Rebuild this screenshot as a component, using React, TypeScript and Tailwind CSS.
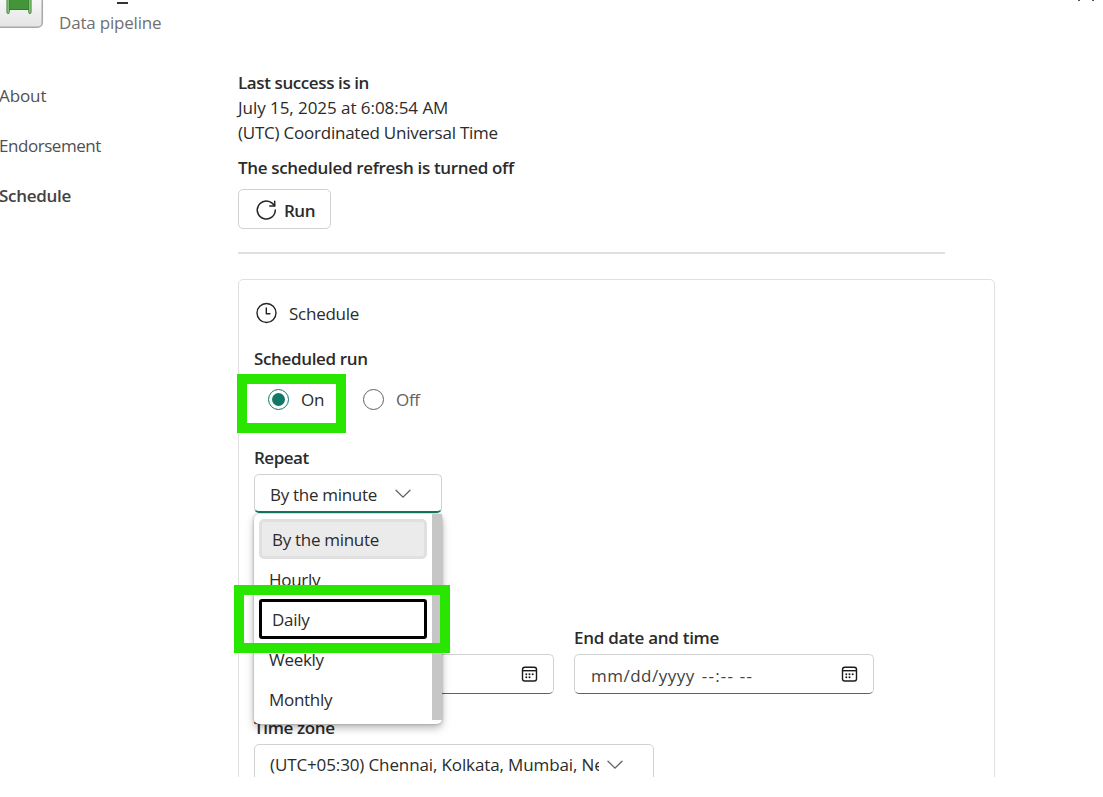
import { useState } from "react";

const REPEAT_OPTIONS = ["By the minute", "Hourly", "Daily", "Weekly", "Monthly"];

export default function App() {
  const [enabled, setEnabled] = useState(true);
  const [repeat, setRepeat] = useState("By the minute");

  return (
    <div className="h-[797px] w-[1103px] overflow-hidden bg-white font-['Open_Sans',sans-serif] text-[17px] leading-[25px] tracking-[-0.3px] text-[#2b2b2b]">
      <div className="flex h-[777px] flex-col overflow-hidden">
        <header className="flex h-[70px] shrink-0 items-start justify-between">
          <div className="flex">
            <PipelineLogo />
            <div className="ml-[15px] flex flex-col">
              <span className="mt-[2px] ml-[58px] h-[2px] w-[11px] bg-[#333]" />
              <span className="mt-[6px] tracking-[-0.2px] text-[#707070]">Data pipeline</span>
            </div>
          </div>
          <div className="mr-[9px] flex gap-[12px]">
            <span className="h-px w-[2px] bg-[#555]" />
            <span className="h-px w-[2px] bg-[#555]" />
          </div>
        </header>

        <div className="flex shrink-0">
          <nav className="flex w-[238px] shrink-0 flex-col gap-[25px] pt-[13px] text-[#505050]">
            <a className="-ml-px tracking-[-0.1px]">About</a>
            <a className="-ml-px tracking-[-0.45px]">Endorsement</a>
            <a className="-ml-px font-semibold tracking-[-0.3px] text-[#424242]">Schedule</a>
          </nav>

          <main className="w-[757px]">
            <p className="font-semibold tracking-[-0.4px]">Last success is in</p>
            <p className="tracking-[-0.05px]">July 15, 2025 at 6:08:54 AM</p>
            <p className="tracking-[-0.23px]">(UTC) Coordinated Universal Time</p>
            <p className="mt-[10px] font-semibold tracking-[-0.33px]">The scheduled refresh is turned off</p>
            <button className="mt-[9px] flex h-[40px] w-[93px] items-center rounded-[5px] border border-[#d1d1d1] pl-[17px]">
              <RefreshIcon />
              <span className="mt-[3px] ml-[8px] font-semibold tracking-[-0.5px]">Run</span>
            </button>
            <div className="mt-[23px] h-[2px] w-[707px] bg-[#e0e0e0]" />

            <section className="mt-[25px] h-[520px] rounded-[5px] border border-[#e0e0e0] px-[15px] pt-[21px]">
              <div className="flex items-center">
                <ClockIcon />
                <span className="ml-[11px] tracking-[-0.25px]">Schedule</span>
              </div>

              <p className="mt-[20px] font-semibold tracking-[-0.35px]">Scheduled run</p>
              <div className="relative mt-[16px] flex">
                <Radio label="On" checked={enabled} onClick={() => setEnabled(true)} />
                <Radio label="Off" checked={!enabled} onClick={() => setEnabled(false)} />
                <Highlight className="-top-[13px] -left-[17px] h-[59px] w-[109px]" />
              </div>

              <p className="mt-[33px] font-semibold tracking-[-0.5px]">Repeat</p>
              <div className="relative mt-[4px] w-[188px]">
                <button className="flex h-[39px] w-full items-center rounded-[5px] border border-b-2 border-[#d1d1d1] border-b-[#117865] pl-[15px]">
                  <span className="mt-[2px]">{repeat}</span>
                  <Chevron className="mt-[2px] ml-[18px]" />
                </button>
                <RepeatMenu value={repeat} onPick={setRepeat} />
              </div>

              <div className="mt-[112px] flex items-end gap-[20px]">
                <DateField />
                <DateField label="End date and time" />
              </div>

              <p className="mt-[21px] font-semibold tracking-[-0.35px]">Time zone</p>
              <button className="mt-[4px] flex h-[40px] w-[400px] items-center rounded-[5px] border border-[#d1d1d1] pl-[15px]">
                <span className="w-[329px] overflow-hidden text-left tracking-[-0.12px] whitespace-nowrap">
                  (UTC+05:30) Chennai, Kolkata, Mumbai, Ne
                </span>
                <Chevron className="mt-px ml-[8px]" />
              </button>
            </section>
          </main>
        </div>
      </div>
    </div>
  );
}

function RepeatMenu({ value, onPick }: { value: string; onPick: (v: string) => void }) {
  return (
    <div className="absolute top-[40px] left-0 z-10 h-[210px] w-[188px] rounded-[5px] bg-white shadow-[0_4px_8px_rgba(0,0,0,0.28),0_0_3px_rgba(0,0,0,0.3)]">
      <div className="flex">
        <div className="flex w-[178px] flex-col pt-[5px] pl-[5px]">
          {REPEAT_OPTIONS.map((o) => (
            <button
              key={o}
              onClick={() => onPick(o)}
              className={
                "flex h-[40px] w-[168px] items-center text-left " +
                (o === value
                  ? "rounded-[5px] border-[3px] border-[#e0e0e0] bg-[#ebebeb] pl-[10px]"
                  : o === "Daily"
                    ? "rounded-[3px] border-[3px] border-black pl-[10px]"
                    : "pl-[10px]")
              }
            >
              {o}
            </button>
          ))}
        </div>
        <div className="h-[206px] w-[10px] bg-[#c6c6c6]" />
      </div>
      <Highlight className="top-[71px] -left-[20px] h-[68px] w-[216px]" />
    </div>
  );
}

function Highlight({ className }: { className: string }) {
  return <div className={"pointer-events-none absolute border-[10px] border-[#28e600] " + className} />;
}

function Radio({ label, checked, onClick }: { label: string; checked: boolean; onClick: () => void }) {
  return (
    <button onClick={onClick} className="flex w-[95px] items-center pl-[14px]">
      <span
        className={
          "flex size-[21px] items-center justify-center rounded-full border " +
          (checked ? "border-[#117865]" : "border-[#616161]")
        }
      >
        {checked && <span className="size-[13px] rounded-full bg-[#117865]" />}
      </span>
      <span className={"ml-[12px] " + (checked ? "" : "text-[#616161]")}>{label}</span>
    </button>
  );
}

function DateField({ label }: { label?: string }) {
  return (
    <div className="w-[300px]">
      {label && <p className="font-semibold tracking-[-0.28px]">{label}</p>}
      <div className="mt-[4px] flex h-[40px] items-center rounded-[5px] border border-[#d1d1d1] border-b-[#616161] pr-[15px] pl-[16px]">
        {label && (
          <span className="mt-[2px] flex gap-[7px] text-[#424242]">
            <span className="tracking-[0.5px]">mm/dd/yyyy</span>
            <span className="tracking-[1.2px]">--:-- --</span>
          </span>
        )}
        <CalendarIcon />
      </div>
    </div>
  );
}

function Chevron({ className }: { className?: string }) {
  return (
    <svg width="16" height="10" viewBox="0 0 16 10" fill="none" stroke="#616161" strokeWidth="1.3" strokeLinecap="round" className={"shrink-0 " + className}>
      <path d="M1 1.2l7 7 7-7" />
    </svg>
  );
}

function CalendarIcon() {
  return (
    <svg width="17" height="17" viewBox="0 0 17 17" fill="none" stroke="#1a1a1a" strokeWidth="1.4" className="ml-auto">
      <rect x="1.5" y="1.2" width="14" height="13.8" rx="2.3" />
      <path d="M2 4.7h13" />
      <g fill="#1a1a1a" stroke="none">
        <circle cx="5.3" cy="8.2" r="1" />
        <circle cx="8.5" cy="8.2" r="1" />
        <circle cx="11.7" cy="8.2" r="1" />
        <circle cx="5.3" cy="11.3" r="1" />
        <circle cx="8.5" cy="11.3" r="1" />
      </g>
    </svg>
  );
}

function ClockIcon() {
  return (
    <svg width="24" height="24" viewBox="0 0 24 24" fill="none" stroke="#242424" strokeWidth="1.4" strokeLinecap="round" strokeLinejoin="round">
      <circle cx="12.5" cy="11" r="9.5" />
      <path d="M12.3 6v5.7h3.6" />
    </svg>
  );
}

function RefreshIcon() {
  return (
    <svg width="20" height="20" viewBox="0 0 20 20" fill="none" stroke="#242424" strokeWidth="1.5" strokeLinecap="round" strokeLinejoin="round" className="mt-px overflow-visible">
      <path d="M19.3 10A9 9 0 1 1 16.4 3.4L18.6 5.6" />
      <path d="M18.7 1.3v4.8h-4.9" />
    </svg>
  );
}

// bottom part of the pipeline tile, the rest is scrolled out of view
function PipelineLogo() {
  return (
    <svg width="44" height="29" viewBox="0 0 44 29">
      <defs>
        <linearGradient id="tile" x1="0" y1="0" x2="0" y2="1">
          <stop offset="0" stopColor="#f8f8f8" />
          <stop offset="1" stopColor="#e4e4e4" />
        </linearGradient>
      </defs>
      <path d="M-2-2h44.3v24.5a4.7 4.7 0 0 1-4.7 4.7H-2z" fill="url(#tile)" stroke="#a8a8a8" strokeWidth="1.5" />
      <path d="M9 0h20v9.5H9z" fill="#43953a" />
      <path d="M9 9.5h20" stroke="#2f7c28" strokeWidth="1" />
      <path d="M7-2v14.4a1.1 1.1 0 0 0 2.2 0V-2M28.8-2v14.4a1.1 1.1 0 0 0 2.2 0V-2" fill="#a9d99b" stroke="#2f7c28" strokeWidth="1" />
    </svg>
  );
}
